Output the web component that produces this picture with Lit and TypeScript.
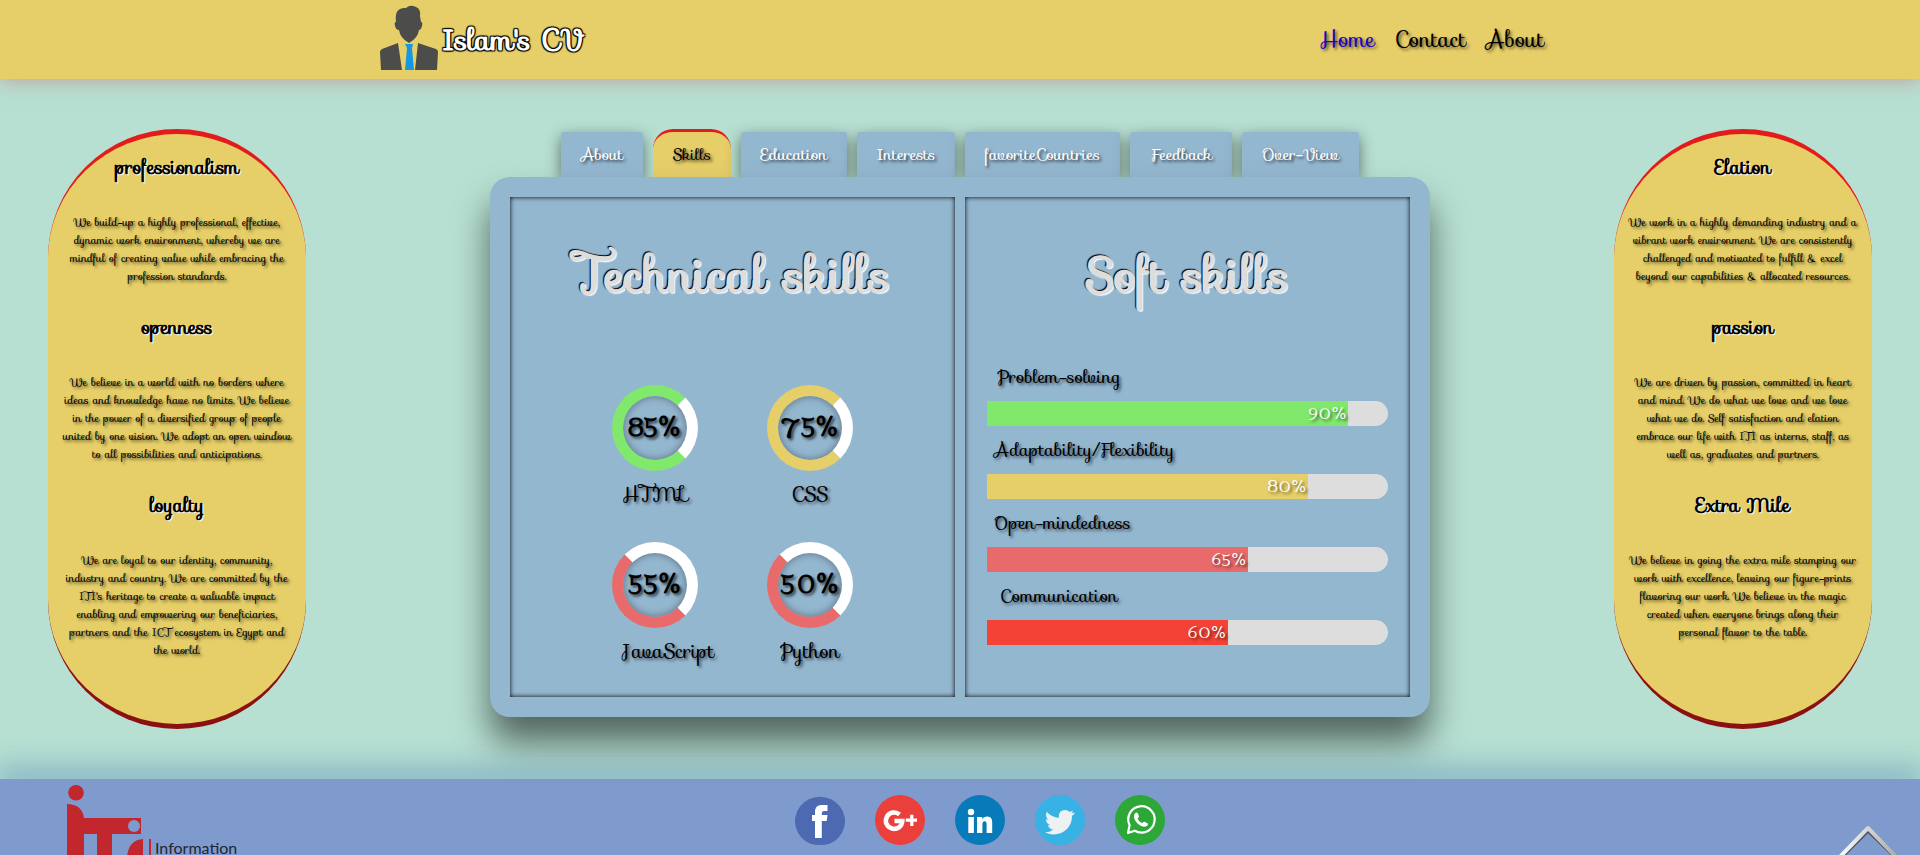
import { LitElement, html, css, svg } from "lit";
import { customElement, property, state } from "lit/decorators.js";

const script = css`"Sofia", cursive`;

interface Value {
  title: string;
  text: string;
}

const leftValues: Value[] = [
  {
    title: "professionalism",
    text: "We build-up a highly professional, effective,\ndynamic work environment, whereby we are\nmindful of creating value while embracing the\nprofession standards.",
  },
  {
    title: "openness",
    text: "We believe in a world with no borders where\nideas and knowledge have no limits. We believe\nin the power of a diversified group of people\nunited by one vision. We adopt an open window\nto all possibilities and anticipations.",
  },
  {
    title: "loyalty",
    text: "We are loyal to our identity, community,\nindustry and country. We are committed by the\nITI's heritage to create a valuable impact\nenabling and empowering our beneficiaries,\npartners and the ICT ecosystem in Egypt and\nthe world.",
  },
];

const rightValues: Value[] = [
  {
    title: "Elation",
    text: "We work in a highly demanding industry and a\nvibrant work environment. We are consistently\nchallenged and motivated to fulfill & excel\nbeyond our capabilities & allocated resources.",
  },
  {
    title: "passion",
    text: "We are driven by passion, committed in heart\nand mind. We do what we love and we love\nwhat we do. Self satisfaction and elation\nembrace our life with ITI as interns, staff, as\nwell as, graduates and partners.",
  },
  {
    title: "Extra Mile",
    text: "We believe in going the extra mile stamping our\nwork with excellence, leaving our figure-prints\nflavoring our work. We believe in the magic\ncreated when everyone brings along their\npersonal flavor to the table.",
  },
];

@customElement("value-pill")
class ValuePill extends LitElement {
  @property({ attribute: false }) values: Value[] = [];

  static styles = css`
    :host {
      display: block;
      box-sizing: border-box;
      width: 258px;
      min-height: 600px;
      padding: 21px 6px 0;
      border-top: 5px solid #e31b1b;
      border-bottom: 5px solid #8b1010;
      border-radius: 130px;
      background: #e6cf69;
      text-align: center;
      font-family: ${script};
    }
    .title {
      margin: 0 0 34px;
      font-size: 19px;
      line-height: 24px;
      font-weight: bold;
      color: #000;
      text-shadow: 1px 1px 1px #fff;
    }
    .text {
      margin: 0 0 30px;
      font-size: 11px;
      line-height: 18px;
      white-space: pre-line;
      color: #000;
      text-shadow: 2px 2px 3px rgba(0, 0, 0, 0.6);
    }
  `;

  render() {
    return this.values.map(
      (v) => html`<h2 class="title">${v.title}</h2><p class="text">${v.text}</p>`
    );
  }
}

@customElement("skill-rings")
class SkillRings extends LitElement {
  static styles = css`
    :host {
      display: grid;
      grid-template-columns: 86px 86px;
      column-gap: 69px;
      row-gap: 31px;
      justify-content: center;
    }
    .item {
      display: flex;
      flex-direction: column;
      align-items: center;
      gap: 6px;
    }
    .ring {
      box-sizing: border-box;
      width: 86px;
      height: 86px;
      border: 11px solid;
      border-radius: 50%;
      display: flex;
      align-items: center;
      justify-content: center;
      box-shadow: inset 0 0 8px rgba(0, 0, 0, 0.4);
      font: bold 24px/30px ${script};
      text-shadow: 2px 2px 3px rgba(0, 0, 0, 0.7);
    }
    .value {
      color: #000;
    }
    .green {
      border-color: #80e86b #fff #80e86b #80e86b;
    }
    .yellow {
      border-color: #e6cf69 #fff #e6cf69 #e6cf69;
    }
    .red {
      border-color: #fff #fff #e86a6a #e86a6a;
    }
    .name {
      width: 66px;
      text-align: center;
      font: 20px/34px ${script};
      color: #000;
      text-shadow: 2px 2px 3px rgba(0, 0, 0, 0.6);
      white-space: nowrap;
    }
  `;

  private skills = [
    { name: "HTML", value: "85%", tone: "green" },
    { name: "CSS", value: "75%", tone: "yellow" },
    { name: "JavaScript", value: "55%", tone: "red" },
    { name: "Python", value: "50%", tone: "red" },
  ];

  render() {
    return this.skills.map(
      (s) => html`<div class="item">
        <div class="ring ${s.tone}"><span class="value">${s.value}</span></div>
        <div class="name">${s.name}</div>
      </div>`
    );
  }
}

@customElement("skill-bars")
class SkillBars extends LitElement {
  static styles = css`
    :host {
      display: flex;
      flex-direction: column;
      gap: 10px;
    }
    .label {
      box-sizing: border-box;
      width: fit-content;
      min-width: 144px;
      padding: 0 7px;
      text-align: center;
      font: 18px/28px ${script};
      color: #000;
      text-shadow: 2px 2px 3px rgba(0, 0, 0, 0.6);
    }
    .track {
      margin-top: 10px;
      height: 25px;
      border-radius: 0 13px 13px 0;
      background: #ddd;
    }
    .fill {
      box-sizing: border-box;
      height: 100%;
      padding-right: 1px;
      text-align: right;
      font: 16px/25px ${script};
      color: #fff;
      text-shadow: 2px 2px 3px rgba(0, 0, 0, 0.6);
    }
    .green {
      background: #80e86b;
    }
    .yellow {
      background: #e6cf69;
    }
    .rose {
      background: #e86a6a;
    }
    .red {
      background: #f44336;
    }
  `;

  private bars = [
    { name: "Problem-solving", value: 90, tone: "green" },
    { name: "Adaptability/Flexibility", value: 80, tone: "yellow" },
    { name: "Open-mindedness", value: 65, tone: "rose" },
    { name: "Communication", value: 60, tone: "red" },
  ];

  render() {
    return this.bars.map(
      (b) => html`<div>
        <div class="label">${b.name}</div>
        <div class="track">
          <div class="fill ${b.tone}" style="width:${b.value}%">${b.value}%</div>
        </div>
      </div>`
    );
  }
}

const socials = [
  {
    name: "Facebook",
    art: svg`<path fill="#4c69b2" d="M16 49A25 24.500 0 1 1 34 49Q30 50 25 50T16 49Z"/>
      <path fill="#fff" d="M20 43V26h-3v-6h3v-3c0-4.700 2.300-7 7-7H32.500v6h-3c-2 0-2.700.8-2.700 2.500V20h5.700l-.8 6h-4.900v17z"/>`,
  },
  {
    name: "Google Plus",
    art: svg`<circle cx="25" cy="25" r="25" fill="#ea3f3b"/>
      <path fill="none" stroke="#fff" stroke-width="4.600" d="M24.500 19.500A8.200 8.200 0 1 0 27.300 26H19.500"/>
      <path fill="#fff" d="M30.800 23.500h4.400V19.800h3.200v3.700h3.600v3.200h-3.600V31h-3.200v-4.300h-4.400z"/>`,
  },
  {
    name: "LinkedIn",
    art: svg`<circle cx="25" cy="25" r="25" fill="#077ab9"/>
      <g fill="#fff"><circle cx="16" cy="17" r="3.200"/><path d="M13.300 22h5.600v16h-5.600zM22 22h5.200v2.200c1-1.600 2.800-2.600 5-2.600 4 0 5 2.800 5 6.400v10h-5.600v-9c0-1.700-.5-2.800-2-2.800s-2.200 1.100-2.200 2.800v9H22z"/></g>`,
  },
  {
    name: "Twitter",
    art: svg`<circle cx="25" cy="25" r="25" fill="#38b1e5"/>
      <path fill="#eef1f2" d="M40 17.500c-.8 1.500-1.900 2.500-3 3.300C37.300 31 29.500 39.500 18.500 39.500c-3.300 0-6-1-8.500-2.500 3.200.3 6-.6 8.300-2.500-2.600-.1-4.700-1.800-5.400-4.300h2.500c-2.800-.8-4.400-3-4.500-6.100l2.600.8c-2.400-2-3.200-5.200-1.700-8.200 3.200 3.700 7.100 5.700 12.200 6C23.200 18 26 15 29.800 15c2 0 3.600.7 4.800 2l3.400-1.500c-.2 1.100-1 2-2 2.800z"/>`,
  },
  {
    name: "WhatsApp",
    art: svg`<circle cx="25" cy="25" r="25" fill="#2ca738"/>
      <path fill="none" stroke="#fff" stroke-width="2.200" stroke-linejoin="round" d="M14.600 30.200A13.200 13.200 0 1 1 19.800 35.800L13 38z"/>
      <path fill="#fff" d="M20.200 18.200c1-1 2.300-.7 2.800.5l.9 2.400c.3 1-.9 1.800-1.200 2.600.9 1.900 2.300 3.300 4.300 4.200.8-.4 1.500-1.500 2.400-1.200l3 1.500c1 .6.6 1.900-.2 2.600-2.600 2.100-7.200.1-9.900-2.600-2.800-2.900-4.700-7.500-2.100-10z"/>`,
  },
];

@customElement("app-root")
class AppRoot extends LitElement {
  @state() private active = "Skills";

  private tabs = ["About", "Skills", "Education", "Interests", "favoriteCountries", "Feedback", "Over-View"];

  static styles = css`
    :host {
      display: flex;
      flex-direction: column;
      height: 100vh;
      overflow: hidden;
      position: relative;
      background: #b7e0d2;
      font-family: ${script};
    }
    .header {
      display: flex;
      justify-content: space-around;
      align-items: center;
      height: 79px;
      padding: 0 8px;
      flex: none;
      background: #e6cf69;
      box-shadow: 0 0 20px rgba(200, 130, 130, 0.8);
    }
    .brand {
      display: flex;
      align-items: center;
    }
    .avatar {
      width: 66px;
      height: 66px;
      margin-bottom: 5px;
    }
    .name {
      margin: 0;
      font-size: 29px;
      line-height: 40px;
      font-weight: bold;
      color: #fff;
      text-shadow: 1px 1px 1px #000, -1px -1px 1px #000, 1px -1px 1px #000, -1px 1px 1px #000;
    }
    .nav {
      display: flex;
      gap: 20px;
    }
    .link {
      font-size: 22px;
      line-height: 32px;
      color: #000;
      text-decoration: none;
      text-shadow: 2px 2px 3px rgba(0, 0, 0, 0.6);
    }
    .current {
      color: #2300c8;
    }
    .main {
      display: flex;
      justify-content: space-between;
      align-items: flex-start;
      flex: none;
      padding: 50px 48px;
    }
    .center {
      width: 940px;
    }
    .tabs {
      display: grid;
      grid-template-columns: 82px 78px 106px 98px 155px 102px 117px;
      column-gap: 10px;
      justify-content: center;
      align-items: end;
      height: 48px;
    }
    .tab {
      height: 45px;
      padding: 0;
      border: 0;
      border-radius: 3px 3px 0 0;
      background: #94b7d0;
      box-shadow: 0 5px 15px rgba(0, 0, 0, 0.5);
      font: 16px/24px ${script};
      color: #fff;
      text-shadow: 2px 2px 3px rgba(0, 0, 0, 0.7);
    }
    .selected {
      height: 48px;
      border-top: 3px solid #e31b1b;
      border-radius: 20px 20px 0 0;
      background: #e6cf69;
      box-shadow: none;
      color: #000;
    }
    .card {
      position: relative;
      display: grid;
      grid-template-columns: 1fr 1fr;
      gap: 10px;
      padding: 20px;
      border-radius: 20px;
      background: #94b7d0;
      box-shadow: 0 25px 35px rgba(0, 0, 0, 0.55);
    }
    .panel {
      box-sizing: border-box;
      min-height: 500px;
      padding: 44px 22px 0;
      box-shadow: inset 0 0 5px #000;
    }
    .heading {
      margin: 0;
      text-align: center;
      font-size: 48px;
      line-height: 68px;
      font-weight: bold;
      color: #ddd;
      text-shadow: -1px -1px 1px #000, 1px 1px 1px #fff;
    }
    .rings {
      margin-top: 76px;
    }
    .bars {
      margin-top: 54px;
    }
    .footer {
      display: grid;
      grid-template-columns: 1fr auto 1fr;
      align-items: start;
      flex: 1;
      min-height: 0;
      overflow: hidden;
      padding-left: 40px;
      background: #7f9bcd;
    }
    .shade {
      height: 0;
      box-shadow: 0 0 30px 6px rgba(70, 120, 180, 0.9);
    }
    .institute {
      display: flex;
      padding: 6px 0 0 26px;
    }
    .iti {
      width: 89px;
      height: 80px;
    }
    .institute-name {
      padding-top: 53px;
      font: 16px/20px "Lato", sans-serif;
      color: #1d2530;
    }
    .social {
      display: flex;
      gap: 30px;
      padding-top: 16px;
    }
    .badge {
      display: block;
      width: 50px;
      height: 50px;
    }
    .top {
      position: absolute;
      right: 16px;
      bottom: 0;
      padding: 0;
      border: 0;
      background: none;
      height: 32px;
    }
  `;

  render() {
    return html`
      <header class="header">
        <div class="brand">
          <svg class="avatar" viewBox="0 0 66 66" aria-hidden="true">
            <g fill="#4c4d4a">
              <path d="M20 18q-2-15 10-14q4-4 10-1q5 2 4 9l1 6q2 0 1 4t-3 4q-1 8-10 13q-9-5-10-13q-3 0-4-4t1-4z" />
              <path d="M22 39L26 66H5L4 48q0-2 2-3zM42 39l18 6q2 1 2 3l-1 18H39z" />
            </g>
            <path fill="#1598e0" d="M29 40h8l-1 4 2 22h-9l2-22z" />
          </svg>
          <h1 class="name">Islam's CV</h1>
        </div>
        <nav class="nav">
          <a class="link current" href="#home">Home</a>
          <a class="link" href="#contact">Contact</a>
          <a class="link" href="#about">About</a>
        </nav>
      </header>
      <main class="main">
        <value-pill .values=${leftValues}></value-pill>
        <div class="center">
          <div class="tabs" role="tablist">
            ${this.tabs.map(
              (t) => html`<button
                class="tab ${t === this.active ? "selected" : ""}"
                role="tab"
                aria-selected=${t === this.active ? "true" : "false"}
                @click=${() => (this.active = t)}
              >${t}</button>`
            )}
          </div>
          <div class="card">
            <section class="panel">
              <h2 class="heading">Technical skills</h2>
              <skill-rings class="rings"></skill-rings>
            </section>
            <section class="panel">
              <h2 class="heading">Soft skills</h2>
              <skill-bars class="bars"></skill-bars>
            </section>
          </div>
        </div>
        <value-pill .values=${rightValues}></value-pill>
      </main>
      <div class="shade"></div>
      <footer class="footer">
        <div class="institute">
          <svg class="iti" viewBox="0 0 89 80" aria-hidden="true">
            <g fill="#c1272d">
              <circle cx="10" cy="7.800" r="7.800" />
              <path d="M1 19q15 0 17 14h57v16H46v31H31V49H18v31H1z" />
              <path d="M61 80V71q2-16 16-17v26zM83 54h2v26h-2z" />
            </g>
            <circle cx="68" cy="41" r="6" fill="#7f9bcd" />
          </svg>
          <span class="institute-name">Information</span>
        </div>
        <div class="social">
          ${socials.map(
            (s) => html`<a href="#social" aria-label=${s.name}><svg class="badge" viewBox="0 0 50 50">${s.art}</svg></a>`
          )}
        </div>
      </footer>
      <button class="top" aria-label="Back to top">
        <svg width="72" height="32" viewBox="0 0 72 32">
          <defs>
            <linearGradient id="metal"><stop offset="0" stop-color="#fff" /><stop offset="1" stop-color="#aaa" /></linearGradient>
          </defs>
          <path fill="none" stroke="#444b58" stroke-width="3" stroke-linejoin="round" d="M8 36L36 8L65 36" />
          <path fill="none" stroke="url(#metal)" stroke-width="4" stroke-linejoin="round" d="M6 36L36 5L66 36" />
        </svg>
      </button>
    `;
  }
}
